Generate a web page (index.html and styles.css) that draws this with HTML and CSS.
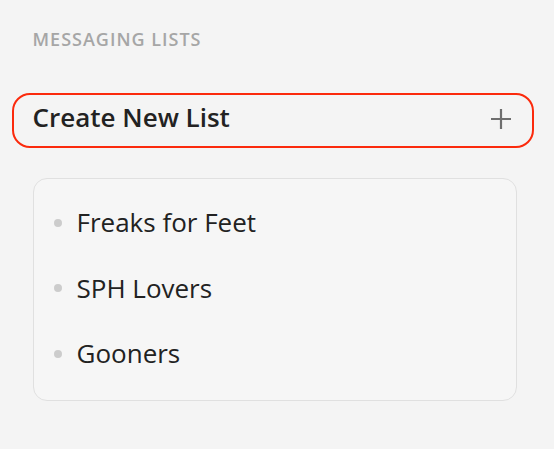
FILE: index.html
```html
<!DOCTYPE html>
<html lang="en">
<head>
<meta charset="utf-8">
<title>Messaging Lists</title>
<link rel="stylesheet" href="styles.css">
</head>
<body>
  <main class="panel">
    <h2 class="section-title">MESSAGING LISTS</h2>
    <button class="create-btn" type="button">
      <span class="create-label">Create New List</span>
      <svg class="plus" width="20" height="20" viewBox="0 0 20 20" aria-hidden="true">
        <path d="M10 0V20M0 10H20" stroke="#6e6e6e" stroke-width="2.2" fill="none"/>
      </svg>
    </button>
    <ul class="list-card">
      <li class="list-item"><span class="dot"></span><span class="item-label">Freaks for Feet</span></li>
      <li class="list-item"><span class="dot"></span><span class="item-label">SPH Lovers</span></li>
      <li class="list-item"><span class="dot"></span><span class="item-label">Gooners</span></li>
    </ul>
  </main>
</body>
</html>
```
FILE: styles.css
```css
* { box-sizing: border-box; }
html, body {
  margin: 0;
  padding: 0;
  background: #f4f4f4;
}
body {
  font-family: "Open Sans", "Noto Sans", sans-serif;
  color: #222222;
}
.panel {
  display: flex;
  flex-direction: column;
  padding: 27px 20px 0 12px;
}
.section-title {
  margin: 0 0 42px 20.5px;
  font-size: 18px;
  line-height: 24px;
  font-weight: 600;
  color: #a6a6a6;
  letter-spacing: 1px;
}
.create-btn {
  display: flex;
  align-items: center;
  justify-content: space-between;
  width: 100%;
  margin: 0;
  padding: 5px 21px 11px 18.5px;
  border: 2px solid #fb2a0c;
  border-radius: 18px;
  background: transparent;
  font-family: inherit;
  text-align: left;
  cursor: pointer;
}
.create-label {
  font-size: 26px;
  line-height: 35px;
  font-weight: 600;
  color: #222222;
}
.plus {
  display: block;
  margin-top: 2px;
}
.list-card {
  list-style: none;
  margin: 30px 17px 0 21px;
  padding: 26.3px 19.5px 28.7px;
  display: flex;
  flex-direction: column;
  gap: 30.5px;
  background: #f6f6f6;
  border: 1px solid #e0e0e0;
  border-radius: 14px;
}
.list-item {
  display: flex;
  align-items: center;
  gap: 15px;
}
.dot {
  width: 8px;
  height: 8px;
  border-radius: 50%;
  background: #cccccc;
  flex: none;
}
.item-label {
  font-size: 26px;
  line-height: 35px;
  color: #222222;
}
```
